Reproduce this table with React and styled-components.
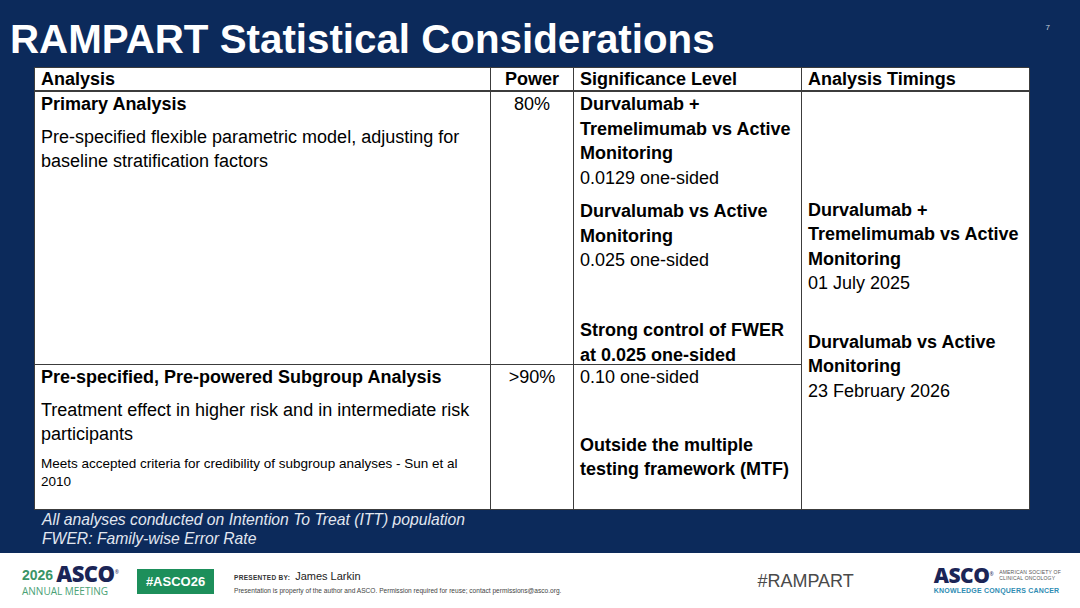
import React from "react";
import styled, { createGlobalStyle } from "styled-components";

const Global = createGlobalStyle`
  html, body { margin: 0; padding: 0; background: #ffffff; }
  body { font-family: "Liberation Sans", Arial, sans-serif; }
  * { box-sizing: border-box; }
`;

const Slide = styled.div`
  width: 1080px;
  height: 608px;
  display: flex;
  flex-direction: column;
  overflow: hidden;
`;

const Main = styled.section`
  height: 553px;
  background: #0c2a5b;
  display: flex;
  flex-direction: column;
`;

const TitleBar = styled.header`
  display: flex;
  justify-content: space-between;
  align-items: flex-start;
  padding: 20px 30px 0 10px;
  margin-bottom: 7px;
`;

const Title = styled.h1`
  margin: 0;
  font-size: 40.3px;
  line-height: 40px;
  font-weight: 700;
  color: #ffffff;
`;

const PageNum = styled.span`
  font-size: 8px;
  color: #c9d1de;
  margin-top: 3px;
`;

const Table = styled.div`
  margin-left: 34px;
  width: 995px;
  display: grid;
  grid-template-columns: 456px 83px 228px 228px;
  grid-template-rows: 24px 273px 145px;
  background: #ffffff;
  border-top: 1px solid #3c3c3c;
  border-left: 1px solid #3c3c3c;
  color: #000;
`;

const Cell = styled.div`
  border-right: 1px solid #3c3c3c;
  border-bottom: 1px solid #3c3c3c;
  padding: 0 6px;
  font-size: 18px;
  line-height: 24.5px;
  display: flex;
  flex-direction: column;
  text-align: ${(p) => (p.$center ? "center" : "left")};
  justify-content: ${(p) => (p.$middle ? "center" : "flex-start")};
  grid-row: ${(p) => p.$row || "auto"};
  grid-column: ${(p) => p.$col || "auto"};
`;

const HeadCell = styled(Cell)`
  font-weight: 700;
  line-height: 22px;
  justify-content: center;
  border-bottom-width: 2px;
`;

const Bold = styled.div`
  font-weight: 700;
`;

const Para = styled.div`
  margin-top: ${(p) => p.$gap || 0}px;
  font-weight: ${(p) => (p.$bold ? 700 : 400)};
`;

const BottomPara = styled(Para)`
  margin-top: auto;
  margin-bottom: -3px;
`;

const Small = styled.div`
  margin-top: 8px;
  font-size: 13.5px;
  line-height: 18px;
`;

const Notes = styled.div`
  padding-left: 42px;
  font-style: italic;
  font-size: 15.7px;
  line-height: 19px;
  color: #e2e7f0;
`;

const Footer = styled.footer`
  flex: 1;
  display: flex;
  align-items: center;
  padding: 0 0 0 22px;
  background: #ffffff;
`;

const MeetingLogo = styled.div`
  display: flex;
  flex-direction: column;
  gap: 4px;
  width: 115px;
  margin-top: -1px;
`;

const LogoTop = styled.div`
  display: flex;
  align-items: flex-end;
  gap: 3px;
`;

const Year = styled.span`
  display: block;
  font-size: 14px;
  line-height: 14px;
  font-weight: 700;
  color: #3a9466;
`;

const AscoWord = styled.span`
  display: block;
  font-family: "Open Sans", "Liberation Sans", sans-serif;
  font-size: ${(p) => p.$size || 22}px;
  line-height: 17px;
  font-weight: 800;
  color: #1b2556;
  letter-spacing: -0.5px;
`;

const Reg = styled.sup`
  font-size: 5px;
  font-weight: 400;
  vertical-align: top;
  position: relative;
  top: -1px;
`;

const Annual = styled.span`
  display: block;
  font-family: "Open Sans", "Liberation Sans", sans-serif;
  font-size: 10px;
  line-height: 10px;
  color: #4aa175;
`;

const Badge = styled.div`
  width: 77px;
  height: 25px;
  background: #1d8f5b;
  color: #ffffff;
  font-weight: 700;
  font-size: 13px;
  display: flex;
  align-items: center;
  justify-content: center;
  margin-top: 2px;
`;

const Presenter = styled.div`
  margin-left: 20px;
  display: flex;
  flex-direction: column;
  gap: 5px;
  margin-top: 2px;
`;

const PresRow = styled.div`
  display: flex;
  align-items: baseline;
  gap: 5px;
`;

const PresLabel = styled.span`
  font-size: 6.5px;
  font-weight: 700;
  letter-spacing: 0.3px;
  color: #333;
`;

const PresName = styled.span`
  font-size: 11px;
  color: #222;
`;

const Legal = styled.span`
  font-size: 6.6px;
  color: #444;
`;

const Hashtag = styled.div`
  margin-left: 196px;
  font-size: 18px;
  color: #4a4a4a;
  margin-top: 2px;
`;

const SocietyLogo = styled.div`
  margin-left: 80px;
  display: flex;
  flex-direction: column;
  gap: 3px;
`;

const SocietyTop = styled.div`
  display: flex;
  align-items: center;
  gap: 6px;
`;

const SocietyName = styled.div`
  font-size: 5px;
  line-height: 6px;
  color: #555;
  letter-spacing: 0.2px;
`;

const Tagline = styled.div`
  font-size: 7px;
  line-height: 8px;
  font-weight: 700;
  color: #2f8db3;
  letter-spacing: 0.2px;
`;

export default function App() {
  return (
    <>
      <Global />
      <Slide>
        <Main>
          <TitleBar>
            <Title>RAMPART Statistical Considerations</Title>
            <PageNum>7</PageNum>
          </TitleBar>
          <Table>
            <HeadCell>Analysis</HeadCell>
            <HeadCell $center>Power</HeadCell>
            <HeadCell>Significance Level</HeadCell>
            <HeadCell>Analysis Timings</HeadCell>

            <Cell $row="2" $col="1">
              <Bold>Primary Analysis</Bold>
              <Para $gap={8}>
                Pre-specified flexible parametric model, adjusting for baseline
                stratification factors
              </Para>
            </Cell>
            <Cell $row="2" $col="2" $center>80%</Cell>
            <Cell $row="2" $col="3">
              <Para $bold>Durvalumab + Tremelimumab vs Active Monitoring</Para>
              <Para>0.0129 one-sided</Para>
              <Para $bold $gap={9}>
                Durvalumab vs Active Monitoring
              </Para>
              <Para>0.025 one-sided</Para>
              <BottomPara $bold>Strong control of FWER at 0.025 one-sided</BottomPara>
            </Cell>
            <Cell $middle $row="2 / span 2" $col="4">
              <Para $bold>Durvalumab + Tremelimumab vs Active Monitoring</Para>
              <Para>01 July 2025</Para>
              <Para $bold $gap={34}>
                Durvalumab vs Active Monitoring
              </Para>
              <Para>23 February 2026</Para>
            </Cell>

            <Cell $row="3" $col="1">
              <Bold>Pre-specified, Pre-powered Subgroup Analysis</Bold>
              <Para $gap={8}>
                Treatment effect in higher risk and in intermediate risk
                participants
              </Para>
              <Small>
                Meets accepted criteria for credibility of subgroup analyses - Sun
                et al 2010
              </Small>
            </Cell>
            <Cell $row="3" $col="2" $center>&gt;90%</Cell>
            <Cell $row="3" $col="3">
              <Para>0.10 one-sided</Para>
              <Para $bold $gap={43}>
                Outside the multiple testing framework (MTF)
              </Para>
            </Cell>
          </Table>
          <Notes>
            All analyses conducted on Intention To Treat (ITT) population
            <br />
            FWER: Family-wise Error Rate
          </Notes>
        </Main>
        <Footer>
          <MeetingLogo>
            <LogoTop>
              <Year>2026</Year>
              <AscoWord>
                ASCO<Reg>®</Reg>
              </AscoWord>
            </LogoTop>
            <Annual>ANNUAL MEETING</Annual>
          </MeetingLogo>
          <Badge>#ASCO26</Badge>
          <Presenter>
            <PresRow>
              <PresLabel>PRESENTED BY:</PresLabel>
              <PresName>James Larkin</PresName>
            </PresRow>
            <Legal>
              Presentation is property of the author and ASCO. Permission required
              for reuse; contact permissions@asco.org.
            </Legal>
          </Presenter>
          <Hashtag>#RAMPART</Hashtag>
          <SocietyLogo>
            <SocietyTop>
              <AscoWord $size={21}>
                ASCO<Reg>®</Reg>
              </AscoWord>
              <SocietyName>
                AMERICAN SOCIETY OF
                <br />
                CLINICAL ONCOLOGY
              </SocietyName>
            </SocietyTop>
            <Tagline>KNOWLEDGE CONQUERS CANCER</Tagline>
          </SocietyLogo>
        </Footer>
      </Slide>
    </>
  );
}
